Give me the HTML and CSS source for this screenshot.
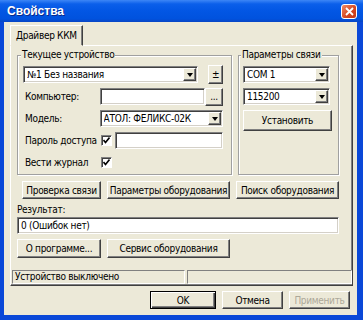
FILE: index.html
```html
<!DOCTYPE html>
<html lang="ru">
<head>
    <meta charset="UTF-8">
    <title>Свойства</title>
    <link rel="stylesheet" href="styles.css">
</head>
<body>
    <div class="window">
        <div class="titlebar">
            <span class="title">Свойства</span>
            <span class="close">
                <svg width="9" height="9" viewBox="0 0 9 9"><path d="M1 1L8 8M8 1L1 8" stroke="#fff" stroke-width="1.8"/></svg>
            </span>
        </div>

        <div class="client">
            <div class="tabs">
                <div class="tab">Драйвер ККМ</div>
            </div>

            <div class="panel">
                <div class="pane">
                    <div class="groups">
                        <fieldset class="group device">
                            <legend>Текущее устройство</legend>
                            <div class="line">
                                <div class="combo device-combo"><span>№1 Без названия</span><i class="drop"></i></div>
                                <button class="btn plus">±</button>
                            </div>
                            <div class="line">
                                <span class="label">Компьютер:</span>
                                <div class="edit computer"></div>
                                <button class="btn dots">...</button>
                            </div>
                            <div class="line">
                                <span class="label">Модель:</span>
                                <div class="combo model"><span>АТОЛ: ФЕЛИКС-02К</span><i class="drop"></i></div>
                            </div>
                            <div class="line">
                                <span class="label">Пароль доступа</span>
                                <span class="check"><svg width="7" height="7" viewBox="0 0 7 7"><path d="M0.5 3L2.5 5.5L6.5 0.5" fill="none" stroke="#000" stroke-width="1.6"/></svg></span>
                                <div class="edit password"></div>
                            </div>
                            <div class="line">
                                <span class="label">Вести журнал</span>
                                <span class="check"><svg width="7" height="7" viewBox="0 0 7 7"><path d="M0.5 3L2.5 5.5L6.5 0.5" fill="none" stroke="#000" stroke-width="1.6"/></svg></span>
                            </div>
                        </fieldset>

                        <fieldset class="group link">
                            <legend>Параметры связи</legend>
                            <div class="line">
                                <div class="combo port"><span>COM 1</span><i class="drop"></i></div>
                            </div>
                            <div class="line">
                                <div class="combo port"><span>115200</span><i class="drop"></i></div>
                            </div>
                            <button class="btn apply-link">Установить</button>
                        </fieldset>
                    </div>

                    <div class="actions">
                        <button class="btn check-link">Проверка связи</button>
                        <button class="btn params">Параметры оборудования</button>
                        <button class="btn search">Поиск оборудования</button>
                    </div>

                    <div class="result-label">Результат:</div>
                    <div class="edit result">0 (Ошибок нет)</div>

                    <div class="actions second">
                        <button class="btn about">О программе...</button>
                        <button class="btn params">Сервис оборудования</button>
                    </div>
                </div>

                <div class="status">
                    <div class="status-cell first">Устройство выключено</div>
                    <div class="status-cell"></div>
                </div>
            </div>

            <div class="footer">
                <button class="btn default">OK</button>
                <button class="btn">Отмена</button>
                <button class="btn disabled">Применить</button>
            </div>
        </div>
    </div>
</body>
</html>
```

FILE: styles.css
```css
* {
    margin: 0;
    padding: 0;
    box-sizing: border-box;
}

body {
    background: #fff;
    font: 10px "DejaVu Sans Condensed", "Liberation Sans", sans-serif;
    letter-spacing: -0.3px;
    color: #000;
    white-space: nowrap;
}

.window {
    width: 363px;
    height: 320px;
    display: flex;
    flex-direction: column;
    background: #ece9d8;
}

.titlebar {
    height: 22px;
    display: flex;
    align-items: center;
    justify-content: space-between;
    padding: 0 6px 0 7px;
    background: linear-gradient(#3d86f6 0%, #0b5fea 18%, #0256e4 50%, #0052de 85%, #0845c4 100%);
}

.title {
    color: #fff;
    font: bold 12px "Liberation Sans", Arial, sans-serif;
    letter-spacing: 0;
    text-shadow: 1px 1px #0a2a8a;
}

.close {
    width: 16px;
    height: 15px;
    display: flex;
    align-items: center;
    justify-content: center;
    border: 1px solid #fff;
    border-radius: 3px;
    background: linear-gradient(135deg, #f08a64, #d4451f 60%, #c0391a);
}

.client {
    flex: 1;
    display: flex;
    flex-direction: column;
    border: solid #0a48d8;
    border-width: 0 6px 5px 4px;
    padding: 3px 4px 0 6px;
}

.tabs {
    display: flex;
    height: 21px;
    margin-bottom: -1px;
    position: relative;
    z-index: 1;
}

.tab {
    width: 73px;
    padding-left: 5px;
    line-height: 20px;
    background: #ece9d8;
    border: 1px solid;
    border-color: #fff #404040 #ece9d8 #fff;
    box-shadow: inset -1px 0 #808080;
}

.panel {
    height: 241px;
    display: flex;
    flex-direction: column;
    border: 1px solid;
    border-color: #fff #404040 #404040 #fff;
    box-shadow: inset -1px -1px #808080;
}

.pane {
    flex: 1;
    padding: 3px 13px 0 6px;
}

.groups {
    display: flex;
    gap: 6px;
}

.group {
    height: 126px;
    min-width: 0;
    border: 1px solid #a0a0a0;
    box-shadow: inset 1px 1px #fff, 1px 1px #fff;
}

.group legend {
    line-height: 12px;
    padding: 0 1px;
    margin-left: -2px;
    background: #ece9d8;
}

.device {
    width: 215px;
    padding: 0 8px 0 5px;
}

.link {
    flex: 1;
    padding: 0 6px 0 4px;
}

.line {
    display: flex;
    align-items: center;
    height: 17px;
    margin-top: 5px;
}

.label {
    width: 77px;
    padding-left: 2px;
}

.edit,
.combo {
    height: 17px;
    background: #fff;
    border: 1px solid;
    border-color: #808080 #fff #fff #808080;
    box-shadow: inset 1px 1px #404040, inset -1px -1px #d4d0c8;
}

.combo {
    display: flex;
    align-items: center;
    padding: 1px 1px 1px 3px;
}

.combo span {
    flex: 1;
    overflow: hidden;
}

.drop {
    width: 13px;
    height: 13px;
    display: flex;
    align-items: center;
    justify-content: center;
    background: #ece9d8;
    border: 1px solid;
    border-color: #fff #404040 #404040 #fff;
    box-shadow: inset -1px -1px #808080;
}

.drop::after {
    content: "";
    border: 3px solid transparent;
    border-top: 4px solid #000;
    border-bottom: 0;
}

.device-combo {
    width: 177px;
}

.computer {
    width: 106px;
}

.model {
    width: 124px;
}

.password {
    width: 109px;
    margin-left: 3px;
}

.port {
    width: 87px;
}

.check {
    width: 11px;
    height: 11px;
    margin-left: 1px;
    display: flex;
    align-items: center;
    justify-content: center;
    background: #fff;
    border: 1px solid;
    border-color: #808080 #fff #fff #808080;
    box-shadow: inset 1px 1px #404040;
}

.btn {
    height: 18px;
    font: 10px "DejaVu Sans Condensed", "Liberation Sans", sans-serif;
    letter-spacing: -0.3px;
    color: #000;
    white-space: nowrap;
    background: #ece9d8;
    border: 1px solid;
    border-color: #fff #404040 #404040 #fff;
    box-shadow: inset -1px -1px #808080;
}

.plus {
    width: 15px;
    height: 19px;
    margin-left: 10px;
}

.dots {
    width: 18px;
}

.apply-link {
    width: 89px;
    height: 21px;
    margin-top: 5px;
}

.actions {
    display: flex;
    margin-top: 6px;
}

.check-link {
    width: 79px;
    margin-left: 5px;
}

.params {
    width: 123px;
    margin-left: 6px;
}

.search {
    width: 103px;
    margin-left: 6px;
}

.result-label {
    line-height: 13px;
    margin-top: 4px;
}

.result {
    margin-top: 1px;
    padding-left: 3px;
    line-height: 15px;
}

.actions.second {
    margin-top: 5px;
}

.actions.second .btn {
    height: 19px;
}

.about {
    width: 84px;
}

.status {
    display: flex;
    gap: 2px;
    height: 14px;
    margin: 0 0 1px 1px;
}

.status-cell {
    flex: 1;
    line-height: 12px;
    padding-left: 2px;
    border: 1px solid;
    border-color: #808080 #fff #fff #808080;
}

.status-cell.first {
    flex: 0 0 173px;
}

.footer {
    display: flex;
    justify-content: flex-end;
    gap: 6px;
    margin-top: 5px;
    padding-right: 3px;
}

.footer .btn {
    width: 61px;
}

.footer .default {
    width: 66px;
    border-color: #000;
    box-shadow: inset 1px 1px #fff, inset -1px -1px #404040, inset -2px -2px #808080;
}

.footer .disabled {
    color: #aca899;
}
```
